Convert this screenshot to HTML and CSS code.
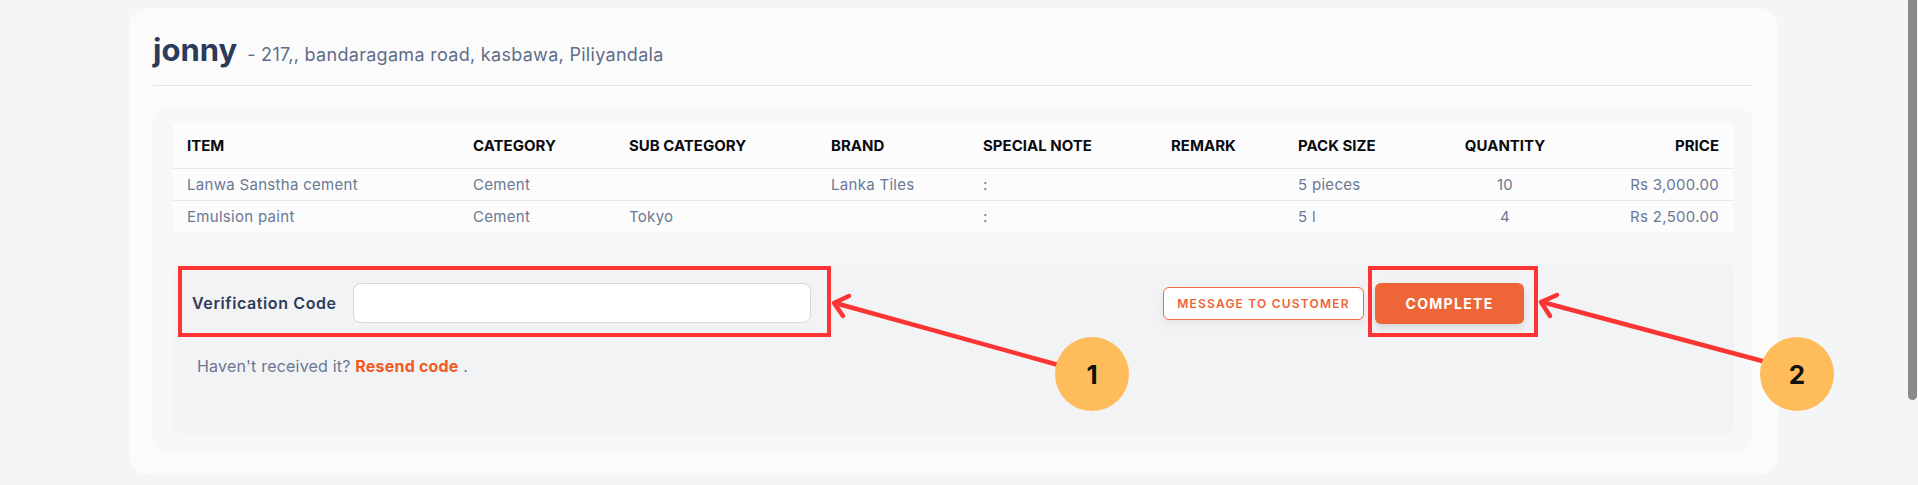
FILE: index.html
```html
<!DOCTYPE html>
<html lang="en">
<head>
<meta charset="utf-8">
<title>Order</title>
<link rel="stylesheet" href="styles.css">
</head>
<body>
<div class="page">
  <section class="card">
    <header class="head">
      <h1 class="name">jonny</h1>
      <span class="addr">- 217,, bandaragama road, kasbawa, Piliyandala</span>
    </header>
    <div class="inner">
      <table class="items">
        <colgroup>
          <col class="c-item"><col class="c-cat"><col class="c-sub"><col class="c-brand"><col class="c-note"><col class="c-remark"><col class="c-pack"><col class="c-qty"><col class="c-price">
        </colgroup>
        <thead>
          <tr>
            <th>ITEM</th><th>CATEGORY</th><th>SUB CATEGORY</th><th>BRAND</th><th>SPECIAL NOTE</th><th>REMARK</th><th>PACK SIZE</th><th class="center">QUANTITY</th><th class="right">PRICE</th>
          </tr>
        </thead>
        <tbody>
          <tr>
            <td>Lanwa Sanstha cement</td><td>Cement</td><td></td><td>Lanka Tiles</td><td>:</td><td></td><td>5 pieces</td><td class="center">10</td><td class="right">Rs 3,000.00</td>
          </tr>
          <tr>
            <td>Emulsion paint</td><td>Cement</td><td>Tokyo</td><td></td><td>:</td><td></td><td>5 l</td><td class="center">4</td><td class="right">Rs 2,500.00</td>
          </tr>
        </tbody>
      </table>
      <div class="verify">
        <div class="verify-row">
          <div class="code-field">
            <label class="code-label" for="code">Verification Code</label>
            <input class="code-input" id="code" type="text">
          </div>
          <div class="actions">
            <button class="btn btn-outline" type="button">MESSAGE TO CUSTOMER</button>
            <button class="btn btn-primary" type="button">COMPLETE</button>
          </div>
        </div>
        <p class="resend">Haven't received it? <a class="resend-link" href="#">Resend code</a> .</p>
      </div>
    </div>
  </section>
</div>
<svg class="annot" width="1918" height="485" viewBox="0 0 1918 485">
  <rect class="box" x="180" y="268" width="649" height="67"/>
  <rect class="box" x="1370" y="268" width="166" height="67"/>
  <line class="arrow" x1="1062" y1="366" x2="835" y2="303"/>
  <polyline class="arrow" points="849,296 834,303 843,316"/>
  <line class="arrow" x1="1766" y1="362" x2="1542" y2="302"/>
  <polyline class="arrow" points="1557,295 1541,302 1550,316"/>
  <circle class="dot" cx="1092" cy="374" r="37"/>
  <circle class="dot" cx="1797" cy="374" r="37"/>
  <text class="num" x="1092" y="384">1</text>
  <text class="num" x="1797" y="384">2</text>
</svg>
<div class="scrollbar"></div>
</body>
</html>
```
FILE: styles.css
```css
* { box-sizing: border-box; }
html, body { margin: 0; padding: 0; }
body {
  background: #f4f5f7;
  font-family: Inter, "Noto Sans", sans-serif;
  width: 1918px;
  height: 485px;
  overflow: hidden;
  position: relative;
}
.page {
  padding: 8px 0 0 129px;
}
.card {
  width: 1649px;
  height: 467px;
  background: #fbfbfc;
  border-radius: 20px;
  padding: 24px 25px 25px 24px;
}
.head {
  display: flex;
  align-items: baseline;
  gap: 10px;
  padding-bottom: 17px;
  border-bottom: 1px solid #e1e4e9;
}
.name {
  margin: 0;
  font-size: 31px;
  line-height: 36px;
  font-weight: 700;
  color: #2c3a5c;
  letter-spacing: 0;
}
.addr {
  font-size: 18px;
  letter-spacing: 0.3px;
  color: #5f6d88;
}
.inner {
  margin-top: 20px;
  background: #f6f7f9;
  border-radius: 16px;
  padding: 17px 19px 17px 20px;
}
.items {
  width: 100%;
  border-collapse: collapse;
  table-layout: fixed;
  background: #fcfcfd;
}
.c-item { width: 286px; }
.c-cat { width: 156px; }
.c-sub { width: 202px; }
.c-brand { width: 152px; }
.c-note { width: 188px; }
.c-remark { width: 127px; }
.c-pack { width: 138px; }
.c-qty { width: 166px; }
.items th {
  text-align: left;
  font-size: 15px;
  font-weight: 700;
  color: #0b0b0f;
  padding: 12px 14px;
  line-height: 21px;
  white-space: nowrap;
}
.items td {
  font-size: 15px;
  letter-spacing: 0.3px;
  color: #6a7894;
  padding: 0 14px;
  height: 32px;
  line-height: 20px;
  border-top: 1px solid #e6e9ee;
  white-space: nowrap;
}
.items th.right, .items td.right { padding-right: 15px; }
.items .center { text-align: center; }
.items .right { text-align: right; }
.verify {
  margin-top: 30px;
  background: #f2f3f5;
  border-radius: 12px;
  padding: 20px 210px 57px 19px;
}
.verify-row {
  display: flex;
  align-items: center;
  justify-content: space-between;
}
.code-field {
  display: flex;
  align-items: center;
  gap: 16px;
}
.code-label {
  font-size: 16px;
  letter-spacing: 0.6px;
  font-weight: 600;
  color: #2e3b5b;
}
.code-input {
  width: 458px;
  height: 40px;
  border: 1px solid #d4d8df;
  border-radius: 8px;
  background: #ffffff;
}
.actions {
  display: flex;
  align-items: center;
  gap: 11px;
}
.btn {
  font-family: Inter, "Noto Sans", sans-serif;
  border-radius: 6px;
  cursor: pointer;
}
.btn-outline {
  height: 33px;
  width: 201px;
  padding: 0;
  font-size: 12px;
  font-weight: 600;
  letter-spacing: 1.2px;
  color: #ee6336;
  background: #ffffff;
  border: 1px solid #ef6a3e;
  box-shadow: 0 4px 8px rgba(0, 0, 0, 0.06);
}
.btn-primary {
  height: 41px;
  width: 149px;
  padding: 0;
  font-size: 14px;
  font-weight: 700;
  letter-spacing: 1.3px;
  color: #ffffff;
  background: #ee6638;
  border: none;
  box-shadow: 0 4px 8px rgba(0, 0, 0, 0.12);
}
.resend {
  margin: 31px 0 0;
  padding-left: 5px;
  font-size: 16px;
  letter-spacing: 0.2px;
  line-height: 22px;
  color: #6b7791;
}
.resend-link {
  color: #f15a22;
  font-weight: 700;
  text-decoration: none;
}
.annot {
  position: absolute;
  left: 0;
  top: 0;
}
.box {
  fill: none;
  stroke: #fb3434;
  stroke-width: 4;
}
.arrow {
  fill: none;
  stroke: #fb3434;
  stroke-width: 4.5;
  stroke-linecap: round;
  stroke-linejoin: round;
}
.dot {
  fill: #ffbc5a;
}
.num {
  font-family: Inter, sans-serif;
  font-size: 26px;
  font-weight: 700;
  fill: #111111;
  text-anchor: middle;
}
.scrollbar {
  position: absolute;
  right: 1px;
  top: 0;
  width: 9px;
  height: 400px;
  background: #8a8a8a;
  border-radius: 0 0 5px 5px;
}
```
